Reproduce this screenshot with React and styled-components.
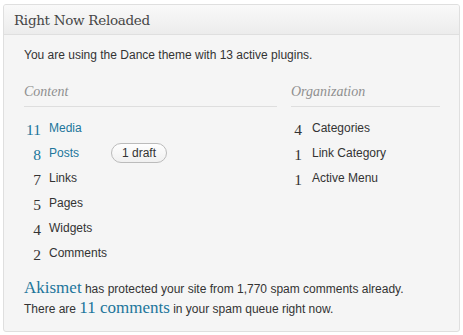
import React from "react";
import styled, { createGlobalStyle } from "styled-components";

const GlobalStyle = createGlobalStyle`
    body {
        margin: 0;
        background: #ffffff;
        font-family: "Liberation Sans", Arial, sans-serif;
    }
`;

const Page = styled.div`
    padding: 4px 3px 4px 3px;
`;

const Panel = styled.div`
    width: 457px;
    border: 1px solid #dfdfdf;
    border-radius: 3px;
    background: #f5f5f5;
    box-sizing: border-box;
    overflow: hidden;
`;

const Header = styled.div`
    height: 29px;
    background: linear-gradient(to bottom, #f9f9f9, #ececec);
    border-bottom: 1px solid #dfdfdf;
    display: flex;
    align-items: center;
    padding-left: 10px;
`;

const Title = styled.h3`
    margin: 0;
    font-family: "DejaVu Serif", Georgia, serif;
    font-weight: normal;
    font-size: 13.5px;
    letter-spacing: -0.3px;
    color: #464646;
`;

const Body = styled.div`
    padding: 13px 20px 12px 20px;
`;

const Intro = styled.p`
    margin: 0;
    font-size: 12px;
    color: #333;
`;

const Columns = styled.div`
    display: grid;
    grid-template-columns: 253px 149px;
    column-gap: 14px;
    margin-top: 22px;
`;

const Heading = styled.div`
    font-family: "Liberation Serif", Georgia, serif;
    font-style: italic;
    font-size: 14px;
    color: #8f8f8f;
    padding-bottom: 6px;
    border-bottom: 1px solid #dedede;
    margin-bottom: 8px;
`;

const Row = styled.div`
    display: flex;
    align-items: center;
    height: 25px;
`;

const Num = styled.span`
    width: ${(p) => p.$w}px;
    text-align: right;
    padding-right: ${(p) => p.$gap}px;
    font-family: "Liberation Serif", Georgia, serif;
    font-size: 15.5px;
    color: ${(p) => (p.$link ? "#21759b" : "#333")};
    position: relative;
    top: 2px;
`;

const Label = styled.span`
    font-size: 12px;
    color: ${(p) => (p.$link ? "#21759b" : "#333")};
`;

const Badge = styled.span`
    margin-left: 32px;
    height: 18px;
    padding: 0 10px;
    border: 1px solid #bbb;
    border-radius: 10px;
    background: linear-gradient(to bottom, #fefefe, #f0f0f0);
    font-size: 12px;
    color: #333;
    display: flex;
    align-items: center;
`;

const Footer = styled.div`
    margin-top: 14px;
    font-size: 12px;
    color: #333;
    line-height: 20px;
`;

const Big = styled.span`
    font-family: "Liberation Serif", Georgia, serif;
    font-size: 17px;
    line-height: 16px;
    color: #21759b;
`;

const content = [
    { n: "11", label: "Media", link: true },
    { n: "8", label: "Posts", link: true, badge: "1 draft" },
    { n: "7", label: "Links" },
    { n: "5", label: "Pages" },
    { n: "4", label: "Widgets" },
    { n: "2", label: "Comments" },
];

const org = [
    { n: "4", label: "Categories" },
    { n: "1", label: "Link Category" },
    { n: "1", label: "Active Menu" },
];

export default function App() {
    return (
        <Page>
            <GlobalStyle />
            <Panel>
                <Header>
                    <Title>Right Now Reloaded</Title>
                </Header>
                <Body>
                    <Intro>You are using the Dance theme with 13 active plugins.</Intro>
                    <Columns>
                        <div>
                            <Heading>Content</Heading>
                            {content.map((r) => (
                                <Row key={r.label}>
                                    <Num $w={17} $gap={8} $link={r.link}>{r.n}</Num>
                                    <Label $link={r.link}>{r.label}</Label>
                                    {r.badge && <Badge>{r.badge}</Badge>}
                                </Row>
                            ))}
                        </div>
                        <div>
                            <Heading>Organization</Heading>
                            {org.map((r) => (
                                <Row key={r.label}>
                                    <Num $w={11} $gap={10}>{r.n}</Num>
                                    <Label>{r.label}</Label>
                                </Row>
                            ))}
                        </div>
                    </Columns>
                    <Footer>
                        <div>
                            <Big>Akismet</Big> has protected your site from 1,770 spam comments already.
                        </div>
                        <div>
                            There are <Big>11 comments</Big> in your spam queue right now.
                        </div>
                    </Footer>
                </Body>
            </Panel>
        </Page>
    );
}
